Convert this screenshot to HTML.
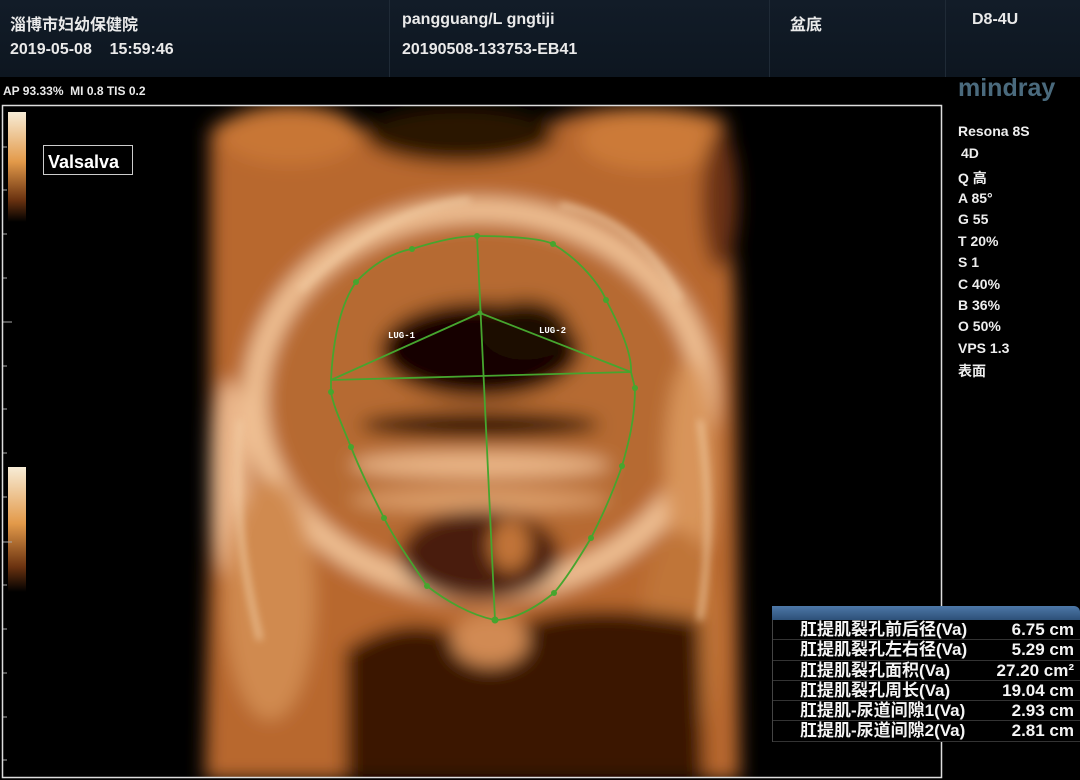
<!DOCTYPE html>
<html><head><meta charset="utf-8"><style>
*{margin:0;padding:0;box-sizing:border-box}
body{width:1080px;height:780px;background:#000;position:relative;overflow:hidden;font-family:"Liberation Sans","Noto Sans CJK SC",sans-serif;color:#fff}
.hdr{position:absolute;left:0;top:0;width:1080px;height:77px;background:linear-gradient(#121c28,#0d1620)}
.div{position:absolute;top:0;width:1px;height:77px;background:#1f2a36}
.t{position:absolute;font-size:16px;font-weight:bold;white-space:nowrap;color:#eaeaea}
.side{position:absolute;left:958px;font-size:14px;font-weight:bold;color:#eee}
.tbl{position:absolute;left:772px;top:606px;width:308px;height:140px}
.tbl .bar{height:14px;background:linear-gradient(#4d78a8,#2d5078);border-radius:0 6px 0 0}
.row{height:20.3px;border-bottom:1px solid #333;font-size:17px;font-weight:bold;line-height:20px;position:relative;white-space:nowrap;color:#f4f4f4}
.row .a{position:absolute;left:27px}
.row .b{position:absolute;right:6px}
</style></head><body>
<div class="hdr"></div>
<div class="div" style="left:389px"></div>
<div class="div" style="left:769px"></div>
<div class="div" style="left:945px"></div>
<div class="t" style="left:10px;top:11px">淄博市妇幼保健院</div>
<div class="t" style="left:10px;top:41px">2019-05-08&nbsp;&nbsp;&nbsp; 15:59:46</div>
<div class="t" style="left:402px;top:11px">pangguang/L gngtiji</div>
<div class="t" style="left:402px;top:41px">20190508-133753-EB41</div>
<div class="t" style="left:790px;top:11px">盆底</div>
<div class="t" style="left:972px;top:11px">D8-4U</div>
<div class="t" style="left:3px;top:84px;font-size:12px">AP 93.33%&nbsp; MI 0.8 TIS 0.2</div>
<div style="position:absolute;left:958px;top:74px;font-size:25px;font-weight:bold;color:#4a6a7d">mindray</div>
<div class="side" style="top:123px">Resona 8S</div>
<div class="side" style="top:145px;left:961px">4D</div>
<div class="side" style="top:168px">Q 高</div>
<div class="side" style="top:190px">A 85°</div>
<div class="side" style="top:211px">G 55</div>
<div class="side" style="top:233px">T 20%</div>
<div class="side" style="top:254px">S 1</div>
<div class="side" style="top:276px">C 40%</div>
<div class="side" style="top:297px">B 36%</div>
<div class="side" style="top:318px">O 50%</div>
<div class="side" style="top:340px">VPS 1.3</div>
<div class="side" style="top:361px">表面</div>

<svg width="1080" height="780" style="position:absolute;left:0;top:0">
<defs>
<filter id="b" filterUnits="userSpaceOnUse" x="0" y="0" width="1080" height="780"><feGaussianBlur stdDeviation="9"/></filter>
<filter id="b2" filterUnits="userSpaceOnUse" x="0" y="0" width="1080" height="780"><feGaussianBlur stdDeviation="4"/></filter>
<linearGradient id="sc" x1="0" y1="0" x2="0" y2="1"><stop offset="0" stop-color="#f7ecd6"/><stop offset=".45" stop-color="#e39a4a"/><stop offset=".8" stop-color="#6a3210"/><stop offset="1" stop-color="#000"/></linearGradient>
<clipPath id="cl"><rect x="3" y="106" width="938" height="671"/></clipPath>
</defs>
<rect x="8" y="112" width="18" height="110" fill="url(#sc)"/>
<rect x="8" y="467" width="18" height="125" fill="url(#sc)"/>
<g stroke="#aaa" stroke-width="1">
<line x1="2" y1="147" x2="7" y2="147"/><line x1="2" y1="190" x2="7" y2="190"/><line x1="2" y1="234" x2="7" y2="234"/><line x1="2" y1="278" x2="7" y2="278"/><line x1="2" y1="322" x2="12" y2="322"/><line x1="2" y1="366" x2="7" y2="366"/><line x1="2" y1="409" x2="7" y2="409"/><line x1="2" y1="453" x2="7" y2="453"/><line x1="2" y1="497" x2="7" y2="497"/><line x1="2" y1="542" x2="12" y2="542"/><line x1="2" y1="585" x2="7" y2="585"/><line x1="2" y1="629" x2="7" y2="629"/><line x1="2" y1="673" x2="7" y2="673"/><line x1="2" y1="717" x2="7" y2="717"/><line x1="2" y1="760" x2="7" y2="760"/>
</g>
<g clip-path="url(#cl)">
<g filter="url(#b)">
<path d="M210 130 Q240 105 300 110 Q360 120 400 150 Q450 120 520 140 Q560 110 620 108 Q690 105 725 120 L735 300 L740 780 L205 780 L210 500 Z" fill="#b8682e"/>
<ellipse cx="460" cy="135" rx="95" ry="28" fill="#2a1205"/>
<ellipse cx="290" cy="135" rx="70" ry="30" fill="#c87636"/>
<ellipse cx="650" cy="140" rx="70" ry="30" fill="#cc7a38"/>
<ellipse cx="720" cy="200" rx="18" ry="70" fill="#6a3212"/>
<ellipse cx="480" cy="400" rx="225" ry="190" fill="none" stroke="#f0c194" stroke-width="24"/>
<ellipse cx="480" cy="395" rx="200" ry="160" fill="#b66a32"/>
<ellipse cx="230" cy="480" rx="20" ry="100" fill="#eab68a"/>
<ellipse cx="270" cy="600" rx="45" ry="120" fill="#d08a50"/>
<ellipse cx="690" cy="470" rx="25" ry="110" fill="#d8945a"/>
<ellipse cx="680" cy="640" rx="40" ry="110" fill="#c07438"/>
<ellipse cx="480" cy="350" rx="100" ry="48" fill="#120602"/>
<ellipse cx="525" cy="330" rx="45" ry="30" fill="#1a0803"/>
<ellipse cx="480" cy="425" rx="120" ry="13" fill="#2a1005"/>
<ellipse cx="480" cy="465" rx="130" ry="13" fill="#eab586"/>
<ellipse cx="480" cy="500" rx="130" ry="11" fill="#dd9f6a"/>
<ellipse cx="480" cy="555" rx="80" ry="45" fill="#4a1f08"/>
<ellipse cx="510" cy="545" rx="20" ry="26" fill="#c27438"/>
<path d="M345 650 Q420 600 480 650 Q540 590 700 620 L705 780 L345 780 Z" fill="#3a1806"/>
<ellipse cx="490" cy="640" rx="38" ry="26" fill="#d18a52"/>
</g>
<g filter="url(#b2)" fill="none" stroke="#f3cfa6" stroke-width="6" opacity=".7">
<path d="M300 290 Q380 210 470 200"/>
<path d="M560 205 Q640 220 680 300"/>
<path d="M240 420 Q230 520 260 640"/>
<path d="M700 420 Q715 520 700 620"/>
</g>
</g>
<rect x="2.5" y="105.5" width="939" height="672" fill="none" stroke="#ddd" stroke-width="1.5"/>
<rect x="43.5" y="145.5" width="89" height="29" fill="#000" stroke="#ccc" stroke-width="1"/>
<text x="48" y="168" font-family="Liberation Sans" font-weight="bold" font-size="18" fill="#fff">Valsalva</text>
<g stroke="#46a52e" stroke-width="1.8" fill="none">
<path d="M477 236 C520 236 545 240 553 244 C580 260 600 285 606 300 C622 330 632 355 631 372 L635 388 C635 420 628 445 622 466 C610 500 600 520 591 538 C575 565 565 580 554 593 C530 612 510 620 495 620 C470 615 445 600 427 586 C410 560 395 540 384 518 C370 490 360 470 351 447 C340 420 333 405 331 392 L331 380 C333 340 340 305 356 282 C375 262 395 252 412 249 C440 240 460 236 477 236 Z"/>
<line x1="477" y1="236" x2="495" y2="620"/>
<line x1="331" y1="380" x2="631" y2="372"/>
<line x1="480" y1="313" x2="331" y2="380"/>
<line x1="480" y1="313" x2="631" y2="372"/>
</g>
<g fill="#46a52e">
<circle cx="477" cy="236" r="3"/><circle cx="412" cy="249" r="3"/><circle cx="356" cy="282" r="3"/><circle cx="553" cy="244" r="3"/><circle cx="606" cy="300" r="3"/><circle cx="331" cy="392" r="3"/><circle cx="351" cy="447" r="3"/><circle cx="384" cy="518" r="3"/><circle cx="427" cy="586" r="3"/><circle cx="495" cy="620" r="3.5"/><circle cx="554" cy="593" r="3"/><circle cx="591" cy="538" r="3"/><circle cx="622" cy="466" r="3"/><circle cx="635" cy="388" r="3"/><circle cx="480" cy="313" r="2.5"/>
</g>
<text x="388" y="338" font-family="Liberation Mono" font-weight="bold" font-size="9" fill="#fff">LUG-1</text>
<text x="539" y="333" font-family="Liberation Mono" font-weight="bold" font-size="9" fill="#fff">LUG-2</text>
</svg>

<div class="tbl">
<div class="bar"></div>
<div style="background:#000;border-left:1px solid #444">
<div class="row"><span class="a">肛提肌裂孔前后径(Va)</span><span class="b">6.75 cm</span></div>
<div class="row"><span class="a">肛提肌裂孔左右径(Va)</span><span class="b">5.29 cm</span></div>
<div class="row"><span class="a">肛提肌裂孔面积(Va)</span><span class="b">27.20 cm²</span></div>
<div class="row"><span class="a">肛提肌裂孔周长(Va)</span><span class="b">19.04 cm</span></div>
<div class="row"><span class="a">肛提肌-尿道间隙1(Va)</span><span class="b">2.93 cm</span></div>
<div class="row"><span class="a">肛提肌-尿道间隙2(Va)</span><span class="b">2.81 cm</span></div>
</div>
</div>
</body></html>
